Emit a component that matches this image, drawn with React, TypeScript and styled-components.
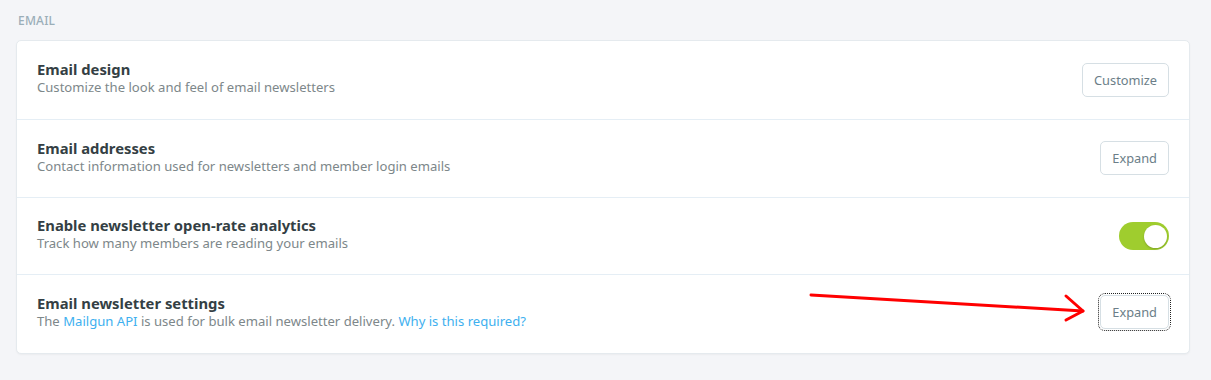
import React from 'react';
import styled, { createGlobalStyle } from 'styled-components';

const GlobalStyle = createGlobalStyle`
    body {
        margin: 0;
        background: #f4f5f8;
        font-family: 'Noto Sans', 'Open Sans', sans-serif;
    }
`;

const Page = styled.div`
    padding: 13px 21px 26px 16px;
    position: relative;
`;

const SectionTitle = styled.h4`
    margin: 0 0 11px 2px;
    font-size: 12px;
    font-weight: 500;
    letter-spacing: 0.2px;
    color: #9baeb8;
    line-height: 16px;
`;

const Card = styled.div`
    background: #fff;
    border: 1px solid #e5eaee;
    border-radius: 5px;
    box-shadow: 0 1px 2px rgba(0, 0, 0, 0.04);
`;

const Row = styled.div<{ $h?: number }>`
    display: flex;
    align-items: center;
    justify-content: space-between;
    height: ${(p) => p.$h ?? 77}px;
    padding: 0 20px;
    & + & {
        border-top: 1px solid #e5eef5;
    }
`;

const Info = styled.div`
    display: flex;
    flex-direction: column;
    margin-top: -4px;
`;

const Title = styled.div`
    font-size: 14.8px;
    font-weight: 700;
    color: #343f44;
    line-height: 19px;
`;

const Desc = styled.div`
    font-size: 13.1px;
    color: #7d878a;
    line-height: 17px;
    a {
        color: #3eb0ef;
        text-decoration: none;
    }
`;

const Button = styled.button<{ $focused?: boolean }>`
    font-family: inherit;
    font-size: 12.8px;
    color: #6b7e88;
    background: #fff;
    border: 1px solid #d6dfe4;
    border-radius: 5px;
    height: 34px;
    padding: 0 11px;
    cursor: pointer;
    outline: ${(p) => (p.$focused ? '1px dotted #222' : 'none')};
    outline-offset: 1px;
    margin-top: ${(p) => (p.$focused ? '-4px' : '-1px')};
`;

const Toggle = styled.div<{ $on: boolean }>`
    width: 50px;
    height: 28px;
    border-radius: 14px;
    background: ${(p) => (p.$on ? '#9fcd2e' : '#e5eff5')};
    display: flex;
    align-items: center;
    justify-content: ${(p) => (p.$on ? 'flex-end' : 'flex-start')};
    padding: 0 2px;
    box-sizing: border-box;
    span {
        width: 23px;
        height: 23px;
        border-radius: 50%;
        background: #fff;
        box-shadow: 0 1px 2px rgba(0, 0, 0, 0.2);
    }
`;

const Arrow = styled.svg`
    position: absolute;
    left: 0;
    top: 0;
    pointer-events: none;
`;

const App = () => {
    return (
        <>
            <GlobalStyle />
            <Page>
                <SectionTitle>EMAIL</SectionTitle>
                <Card>
                    <Row $h={78}>
                        <Info>
                            <Title>Email design</Title>
                            <Desc>Customize the look and feel of email newsletters</Desc>
                        </Info>
                        <Button>Customize</Button>
                    </Row>
                    <Row>
                        <Info>
                            <Title>Email addresses</Title>
                            <Desc>Contact information used for newsletters and member login emails</Desc>
                        </Info>
                        <Button>Expand</Button>
                    </Row>
                    <Row $h={76}>
                        <Info>
                            <Title>Enable newsletter open-rate analytics</Title>
                            <Desc>Track how many members are reading your emails</Desc>
                        </Info>
                        <Toggle $on>
                            <span />
                        </Toggle>
                    </Row>
                    <Row $h={78}>
                        <Info>
                            <Title>Email newsletter settings</Title>
                            <Desc>
                                The <a href="#">Mailgun API</a> is used for bulk email newsletter delivery.{' '}
                                <a href="#">Why is this required?</a>
                            </Desc>
                        </Info>
                        <Button $focused>Expand</Button>
                    </Row>
                </Card>
                <Arrow width="1211" height="380">
                    <g stroke="#ff0000" strokeWidth="3" strokeLinecap="round" fill="none">
                        <line x1="811" y1="295" x2="1083" y2="311" />
                        <polyline points="1066,296 1083,311 1066,320" strokeLinejoin="round" />
                    </g>
                </Arrow>
            </Page>
        </>
    );
};

export default App;
